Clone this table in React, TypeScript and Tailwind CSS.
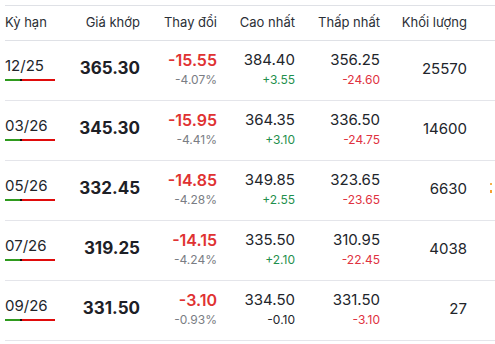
import React from "react";

type Row = {
  term: string;
  price: string;
  chg: string;
  pct: string;
  high: string;
  highChg: string;
  highUp: boolean;
  low: string;
  lowChg: string;
  vol: string;
};

const rows: Row[] = [
  { term: "12/25", price: "365.30", chg: "-15.55", pct: "-4.07%", high: "384.40", highChg: "+3.55", highUp: true, low: "356.25", lowChg: "-24.60", vol: "25570" },
  { term: "03/26", price: "345.30", chg: "-15.95", pct: "-4.41%", high: "364.35", highChg: "+3.10", highUp: true, low: "336.50", lowChg: "-24.75", vol: "14600" },
  { term: "05/26", price: "332.45", chg: "-14.85", pct: "-4.28%", high: "349.85", highChg: "+2.55", highUp: true, low: "323.65", lowChg: "-23.65", vol: "6630" },
  { term: "07/26", price: "319.25", chg: "-14.15", pct: "-4.24%", high: "335.50", highChg: "+2.10", highUp: true, low: "310.95", lowChg: "-22.45", vol: "4038" },
  { term: "09/26", price: "331.50", chg: "-3.10", pct: "-0.93%", high: "334.50", highChg: "-0.10", highUp: false, low: "331.50", lowChg: "-3.10", vol: "27" },
];

const grid = "grid grid-cols-[55px_80px_77px_78px_85px_87px_1fr]";

export default function App() {
  return (
    <div
      className="w-[495px] h-[344px] bg-white overflow-hidden pt-[5px] pl-[5px]"
      style={{ fontFamily: "Inter, 'Noto Sans', sans-serif" }}
    >
      <div className="w-[500px]">
        <div className={`${grid} h-[36px] border-t border-b border-[#dfe1e6] items-center text-[13px] text-[#2b2f36]`}>
          <div>Kỳ hạn</div>
          <div className="text-right">Giá khớp</div>
          <div className="text-right">Thay đổi</div>
          <div className="text-right">Cao nhất</div>
          <div className="text-right">Thấp nhất</div>
          <div className="text-right">Khối lượng</div>
          <div />
        </div>
        {rows.map((r, i) => (
          <div
            key={i}
            className={`${grid} h-[60px] border-b border-[#e4e5ea] items-center pb-[3px]`}
          >
            <div className="flex flex-col items-start">
              <div className="text-[15px] leading-[18px] text-[#22252b]">{r.term}</div>
              <div className="mt-[4px] flex h-[2px] w-[50px]">
                <div className="w-[15px] bg-[#2f9a1e]" />
                <div className="w-[2px] bg-[#111]" />
                <div className="flex-1 bg-[#e00b0b]" />
              </div>
            </div>
            <div className="text-right text-[17px] font-bold text-[#1d2026]">{r.price}</div>
            <div className="flex flex-col items-end">
              <div className="text-[16px] leading-[20px] font-semibold text-[#e03232]">{r.chg}</div>
              <div className="text-[12px] leading-[16px] mt-[2px] text-[#7a7d84]">{r.pct}</div>
            </div>
            <div className="flex flex-col items-end">
              <div className="text-[15px] leading-[20px] text-[#22252b]">{r.high}</div>
              <div className={`text-[12px] leading-[16px] mt-[2px] ${r.highUp ? "text-[#1f8f4d]" : "text-[#22252b]"}`}>{r.highChg}</div>
            </div>
            <div className="flex flex-col items-end">
              <div className="text-[15px] leading-[20px] text-[#22252b]">{r.low}</div>
              <div className="text-[12px] leading-[16px] mt-[2px] text-[#e03241]">{r.lowChg}</div>
            </div>
            <div className="text-right text-[15px] text-[#22252b]">{r.vol}</div>
            <div className="relative h-full">
              {i === 2 && (
                <div className="absolute left-[23px] top-[22px] flex flex-col gap-[5px]">
                  <div className="w-[2px] h-[2px] bg-[#f5b04a]" />
                  <div className="w-[2px] h-[3px] bg-[#f5a030]" />
                </div>
              )}
            </div>
          </div>
        ))}
      </div>
    </div>
  );
}
